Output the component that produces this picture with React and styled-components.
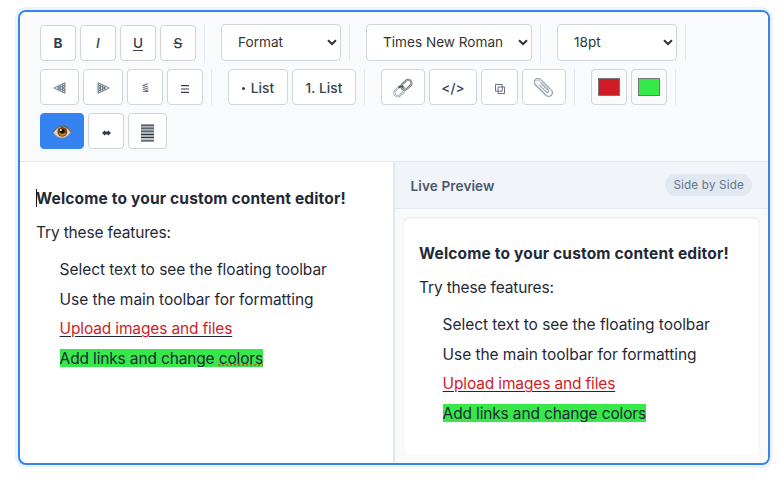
import React from 'react';
import styled, { createGlobalStyle, css } from 'styled-components';

const GlobalStyle = createGlobalStyle`
  * { box-sizing: border-box; }
  body {
    margin: 0;
    background: #fff;
    color: #1f2a37;
    font-family: Inter, "Liberation Sans", sans-serif;
  }
`;

const Page = styled.div`
  width: 780px;
  height: 484px;
  padding: 10px 10px 19px 18px;
  overflow: hidden;
`;

const Editor = styled.main`
  display: flex;
  flex-direction: column;
  width: 752px;
  height: 455px;
  border: 2px solid #3583f0;
  border-radius: 8px;
  background: #fff;
  box-shadow: 0 0 0 3px #ebf3fd;
  overflow: hidden;
`;

const Toolbar = styled.div`
  display: flex;
  flex-direction: column;
  gap: 8px;
  padding: 12px 20px;
  border-bottom: 1px solid #e2e8f0;
  background: #f9fafc;
`;

const ToolbarRow = styled.div`
  display: flex;
  gap: 16px;
`;

const Group = styled.div`
  display: flex;
  align-items: flex-end;
  gap: 4px;
  padding-right: 8px;
  border-right: 1px solid ${(p) => (p.$last ? 'transparent' : '#e1e8f0')};
`;

const ToolButton = styled.button`
  display: flex;
  align-items: center;
  justify-content: center;
  width: ${(p) => p.$width || 36}px;
  height: 36px;
  padding: 1px 0 0;
  border: 1px solid #d0d5dc;
  border-radius: 4px;
  background: #fff;
  color: #374151;
  font: 500 13.6px/1 Inter, "Liberation Sans", sans-serif;
  letter-spacing: 0.1px;
  white-space: pre;

  ${(p) => p.$lowered && css`
    padding-top: 3px;
  `}

  ${(p) => p.$active && css`
    border-color: #3583f0;
    background: #3583f0;
  `}

  svg { display: block; flex: none; }
`;

const Bullet = styled.span`
  width: 3px;
  height: 3px;
  margin-right: 6px;
  border-radius: 50%;
  background: #374151;
`;

const Bold = styled.span`font-weight: 700;`;
const Italic = styled.span`font-style: italic;`;
const Underlined = styled.span`
  text-decoration: underline;
  text-underline-offset: 2px;
  text-decoration-thickness: 1px;
`;
const Struck = styled.span`
  text-decoration: line-through;
  text-decoration-thickness: 1px;
`;

const Dropdown = styled.button`
  display: flex;
  align-items: center;
  justify-content: space-between;
  width: ${(p) => p.$width}px;
  height: 37px;
  padding: 1px 3px 0 16px;
  border: 1px solid #d0d5dc;
  border-radius: 4px;
  background: #fff;
  color: #333;
  font: 400 13.6px/1 Inter, "Liberation Sans", sans-serif;
  white-space: nowrap;

  svg { margin-bottom: 1px; }
`;

const SwatchButton = styled(ToolButton)`
  padding: 0;
  background: #f9fafc;
`;

const Swatch = styled.span`
  width: 22px;
  height: 18px;
  border: 1px solid #777;
  background: ${(p) => p.$color};
`;

const Body = styled.div`
  display: flex;
  flex: 1;
  min-height: 0;
`;

const EditPane = styled.section`
  width: 373px;
  padding: 16px;
`;

const PreviewPane = styled.section`
  display: flex;
  flex: 1;
  flex-direction: column;
  border-left: 2px solid #e2e8f0;
  background: #fafafa;
`;

const PreviewHeader = styled.header`
  display: flex;
  align-items: center;
  justify-content: space-between;
  height: 47px;
  padding: 0 16px 0 15.5px;
  border-bottom: 1px solid #e2e8f0;
  background: #f1f4f9;
`;

const PreviewTitle = styled.h2`
  margin: 2px 0 0;
  color: #4a586b;
  font-size: 13.6px;
  font-weight: 600;
  letter-spacing: 0.1px;
`;

const Badge = styled.span`
  height: 22px;
  padding: 0 8px;
  border-radius: 11px;
  background: #e2e8f0;
  color: #64748b;
  font-size: 11.7px;
  line-height: 22px;
  letter-spacing: 0.16px;
`;

const PreviewCard = styled.div`
  flex: 1;
  margin: 8px;
  padding: 16px;
  border-radius: 6px;
  background: #fff;
  box-shadow: inset 0 1px 3px rgba(0, 0, 0, 0.1);
`;

const Heading = styled.p`
  position: relative;
  margin: 8px 0;
  font-size: 15.5px;
  font-weight: 700;
  line-height: 25.6px;
  letter-spacing: 0.17px;
`;

const Caret = styled.span`
  position: absolute;
  top: 3px;
  left: 0;
  width: 1px;
  height: 18px;
  background: #111;
`;

const Paragraph = styled.p`
  margin: 8px 0;
  font-size: 15.5px;
  line-height: 25.6px;
  letter-spacing: -0.16px;
`;

const FeatureList = styled.ul`
  margin: 12px 0;
  padding: 0 0 0 23.6px;
  list-style: none;
`;

const Feature = styled.li`
  margin-bottom: 4px;
  font-size: 15.5px;
  line-height: 25.6px;
  letter-spacing: ${(p) => (p.$tight ? '-0.15px' : '-0.06px')};
`;

const RedText = styled.span`color: #d01c27;`;
const LinkText = styled.span`
  text-decoration: underline #1f2a37 1px;
  text-underline-offset: 2px;
`;
const Highlight = styled.span`
  display: inline-block;
  height: 18px;
  background: linear-gradient(#37e84b, #37e84b);
  box-shadow: 0 -1px 0 #37e84b;
  clip-path: inset(-1px 0 1px 0);
  line-height: 18px;
`;
const Misspelled = styled.span`
  text-decoration: underline dotted #e8503a 2px;
  text-underline-offset: 1px;
`;

const Chevron = () => (
  <svg width="10" height="8" viewBox="0 0 10 8" fill="none" stroke="#333" strokeWidth="2">
    <path d="M1 1.2 5 5 9 1.2" />
  </svg>
);

const TriangleIcon = ({ flip }) => (
  <svg width="13" height="12" viewBox="0 0 13 12" fill="none" stroke="#4b5563" strokeWidth=".75">
    <g transform={flip ? 'translate(13 0) scale(-1 1)' : undefined}>
      <path d="M12 .7.8 6 12 11.3M12 2.8 4.8 6 12 9.2M12 4.6 8.8 6 12 7.4M12 .7v10.6M9.7 1.8v8.4M7.3 2.9v6.2M5 4v4" />
    </g>
  </svg>
);

const StackedLessIcon = () => (
  <svg width="7" height="10" viewBox="0 0 7 10" fill="none" stroke="#4b5563" strokeWidth=".85">
    <path d="M6.2.6.8 2.4l5.4 1.7M.8 4.3l5.4 1.9M.8 6.2l5.4 1.7M1 8.5h5.3" />
  </svg>
);

const JustifyIcon = () => (
  <svg width="8" height="10" viewBox="0 0 8 10" fill="#374151">
    <path d="M0 1h8v1.2H0zM0 4.4h8v1.2H0zM0 7.8h8V9H0z" />
  </svg>
);

const ArrowsIcon = () => (
  <svg width="9" height="6" viewBox="0 0 9 6" fill="#2d3a4b">
    <path d="M0 3 3 .2v1.3h3V.2L9 3 6 5.8V4.5H3v1.3z" />
  </svg>
);

const LinesIcon = () => (
  <svg width="13" height="18" viewBox="0 0 13 18" fill="none">
    <path d="M0 2.5h13M0 5.5h13M0 8.7h13M0 11.8h13M0 15h13" stroke="#aeb3b9" strokeWidth="1.4" />
    <path d="M0 1h13M0 4.1h13M0 7.2h13M0 10.3h13M0 13.4h13M0 16.8h13" stroke="#293747" strokeWidth="1.25" />
  </svg>
);

const CopyIcon = () => (
  <svg width="10" height="10" viewBox="0 0 10 10" fill="none" stroke="#596370" strokeWidth=".9">
    <path d="M.5.5h6.7v6.7H.5zM3 3h6.5v6.5H3z" />
  </svg>
);

const EyeIcon = () => (
  <svg width="20" height="16" viewBox="0 0 20 16">
    <path d="M1 8.5Q5 2.3 10 2.2q5 .1 9 5.5Q15 14 10 14 5 14 1 8.5z" fill="#d9d5d2" />
    <path d="M1 8.3Q5 2.1 10 2.1q5 0 9 5.6" fill="none" stroke="#6f6058" strokeWidth="1.4" />
    <path d="M1 8.7Q5 14.1 10 14q5 0 9-6.1" fill="none" stroke="#a58e83" strokeWidth=".8" />
    <circle cx="10.3" cy="7.8" r="4.9" fill="#75420f" />
    <path d="M6.5 9.2a4.2 4.2 0 0 0 7.7 0z" fill="#d58c23" />
    <circle cx="10.3" cy="7.4" r="2.3" fill="#17100d" />
    <circle cx="8.9" cy="5.9" r="1" fill="#fff" />
  </svg>
);

const LinkIcon = () => (
  <svg width="20" height="20" viewBox="0 0 20 20" fill="none">
    <g transform="rotate(-43 10 10)">
      <rect x="-.6" y="6.7" width="11.4" height="6.6" rx="3.3" stroke="#87919a" strokeWidth="2.1" />
      <rect x="-.6" y="6.7" width="11.4" height="6.6" rx="3.3" stroke="#d5e1e9" strokeWidth="1.2" />
      <rect x="9" y="6.7" width="11.4" height="6.6" rx="3.3" stroke="#686c71" strokeWidth="2.1" />
      <rect x="9" y="6.7" width="11.4" height="6.6" rx="3.3" stroke="#bcc4cb" strokeWidth=".9" />
      <path d="M7 6.7h.6a3.3 3.3 0 0 1 3.2 3.4" stroke="#4d5359" strokeWidth="1.8" />
    </g>
  </svg>
);

const ClipIcon = () => (
  <svg width="20" height="20" viewBox="0 0 20 20" fill="none" strokeLinecap="round">
    <g transform="rotate(45 10 10)">
      <path d="M14.5 7.4H2.2a3.1 3.1 0 0 0 0 6.2h14.6a3.9 3.9 0 0 0 0-7.8H5.5" transform="translate(-.3 .6)" stroke="#c5d0d9" strokeWidth="1.2" />
      <path d="M14.5 6.4H1.4a3.6 3.6 0 0 0 0 7.2h15.2a3.7 3.7 0 0 0 0-7.4M5.4 8.8h9.2a1.2 1.2 0 0 1 0 2.4H5" stroke="#94a3b1" strokeWidth="1.1" />
    </g>
  </svg>
);

function Content({ editing }) {
  return (
    <>
      <Heading>{editing && <Caret />}Welcome to your custom content editor!</Heading>
      <Paragraph>Try these features:</Paragraph>
      <FeatureList>
        <Feature>Select text to see the floating toolbar</Feature>
        <Feature>Use the main toolbar for formatting</Feature>
        <Feature $tight><LinkText><RedText>Upload images and files</RedText></LinkText></Feature>
        <Feature $tight>
          <Highlight>
            Add links and change {editing ? <Misspelled>colors</Misspelled> : 'colors'}
          </Highlight>
        </Feature>
      </FeatureList>
    </>
  );
}

export default function App() {
  return (
    <Page>
      <GlobalStyle />
      <Editor>
        <Toolbar>
          <ToolbarRow>
            <Group>
              <ToolButton><Bold>B</Bold></ToolButton>
              <ToolButton><Italic>I</Italic></ToolButton>
              <ToolButton><Underlined>U</Underlined></ToolButton>
              <ToolButton><Struck>S</Struck></ToolButton>
            </Group>
            <Group><Dropdown $width={120}>Format<Chevron /></Dropdown></Group>
            <Group><Dropdown $width={166}>Times New Roman<Chevron /></Dropdown></Group>
            <Group><Dropdown $width={120}>18pt<Chevron /></Dropdown></Group>
          </ToolbarRow>
          <ToolbarRow>
            <Group>
              <ToolButton $width={39} aria-label="Align left"><TriangleIcon /></ToolButton>
              <ToolButton $width={40} aria-label="Align right"><TriangleIcon flip /></ToolButton>
              <ToolButton aria-label="Align center"><StackedLessIcon /></ToolButton>
              <ToolButton $lowered aria-label="Justify"><JustifyIcon /></ToolButton>
            </Group>
            <Group>
              <ToolButton $width={60} $lowered><Bullet />List</ToolButton>
              <ToolButton $width={64} $lowered>1. List</ToolButton>
            </Group>
            <Group>
              <ToolButton $width={44} aria-label="Link"><LinkIcon /></ToolButton>
              <ToolButton $width={48} $lowered>&lt;/&gt;</ToolButton>
              <ToolButton $width={37} $lowered aria-label="Copy"><CopyIcon /></ToolButton>
              <ToolButton $width={44} aria-label="Attach"><ClipIcon /></ToolButton>
            </Group>
            <Group>
              <SwatchButton aria-label="Text color"><Swatch $color="#d01c27" /></SwatchButton>
              <SwatchButton aria-label="Highlight color"><Swatch $color="#37e84b" /></SwatchButton>
            </Group>
          </ToolbarRow>
          <ToolbarRow>
            <Group $last>
              <ToolButton $width={44} $active aria-label="Preview"><EyeIcon /></ToolButton>
              <ToolButton $lowered aria-label="Side by side"><ArrowsIcon /></ToolButton>
              <ToolButton $width={39} $lowered aria-label="Stacked"><LinesIcon /></ToolButton>
            </Group>
          </ToolbarRow>
        </Toolbar>
        <Body>
          <EditPane><Content editing /></EditPane>
          <PreviewPane>
            <PreviewHeader>
              <PreviewTitle>Live Preview</PreviewTitle>
              <Badge>Side by Side</Badge>
            </PreviewHeader>
            <PreviewCard><Content /></PreviewCard>
          </PreviewPane>
        </Body>
      </Editor>
    </Page>
  );
}
